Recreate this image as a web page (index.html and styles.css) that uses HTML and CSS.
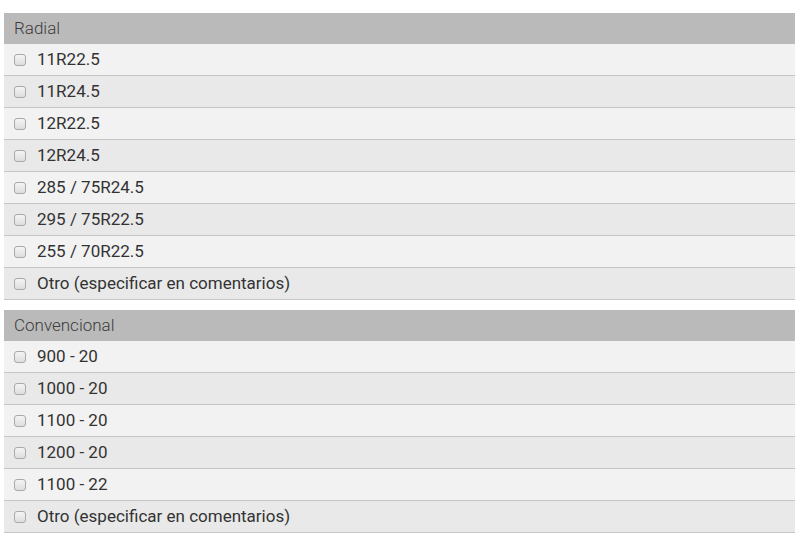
FILE: index.html
```html
<!DOCTYPE html>
<html lang="es">
<head>
<meta charset="utf-8">
<title>Medidas</title>
<link rel="stylesheet" href="styles.css">
</head>
<body>
<div class="page">
  <section class="group">
    <div class="group-title">Radial</div>
    <label class="opt"><span class="box"></span><span class="txt">11R22.5</span></label>
    <label class="opt"><span class="box"></span><span class="txt">11R24.5</span></label>
    <label class="opt"><span class="box"></span><span class="txt">12R22.5</span></label>
    <label class="opt"><span class="box"></span><span class="txt">12R24.5</span></label>
    <label class="opt"><span class="box"></span><span class="txt">285 / 75R24.5</span></label>
    <label class="opt"><span class="box"></span><span class="txt">295 / 75R22.5</span></label>
    <label class="opt"><span class="box"></span><span class="txt">255 / 70R22.5</span></label>
    <label class="opt"><span class="box"></span><span class="txt">Otro (especificar en comentarios)</span></label>
  </section>
  <section class="group">
    <div class="group-title">Convencional</div>
    <label class="opt"><span class="box"></span><span class="txt">900 - 20</span></label>
    <label class="opt"><span class="box"></span><span class="txt">1000 - 20</span></label>
    <label class="opt"><span class="box"></span><span class="txt">1100 - 20</span></label>
    <label class="opt"><span class="box"></span><span class="txt">1200 - 20</span></label>
    <label class="opt"><span class="box"></span><span class="txt">1100 - 22</span></label>
    <label class="opt"><span class="box"></span><span class="txt">Otro (especificar en comentarios)</span></label>
  </section>
</div>
</body>
</html>
```
FILE: styles.css
```css
html, body {
  margin: 0;
  padding: 0;
  background: #ffffff;
}
body {
  font-family: Roboto, "Liberation Sans", Arial, sans-serif;
}
.page {
  padding: 13px 15px 0 4px;
  display: flex;
  flex-direction: column;
  gap: 10px;
}
.group {
  display: flex;
  flex-direction: column;
}
.group-title {
  height: 31px;
  background: #bbbaba;
  color: #3c3c3c;
  font-size: 17px;
  font-weight: 300;
  line-height: 31px;
  padding-left: 10px;
}
.opt {
  height: 31px;
  border-bottom: 1px solid #c6c6c6;
  display: flex;
  align-items: center;
  background: #f2f2f2;
  color: #333333;
  font-size: 17px;
}
.opt:nth-child(odd) {
  background: #e9e9e9;
}
.txt {
  padding-bottom: 2px;
}
.box {
  width: 10px;
  height: 10px;
  margin-left: 10px;
  margin-right: 11px;
  border: 1px solid #a9a9a9;
  border-radius: 3px;
  background: linear-gradient(#f4f4f4, #dedede);
}
```
